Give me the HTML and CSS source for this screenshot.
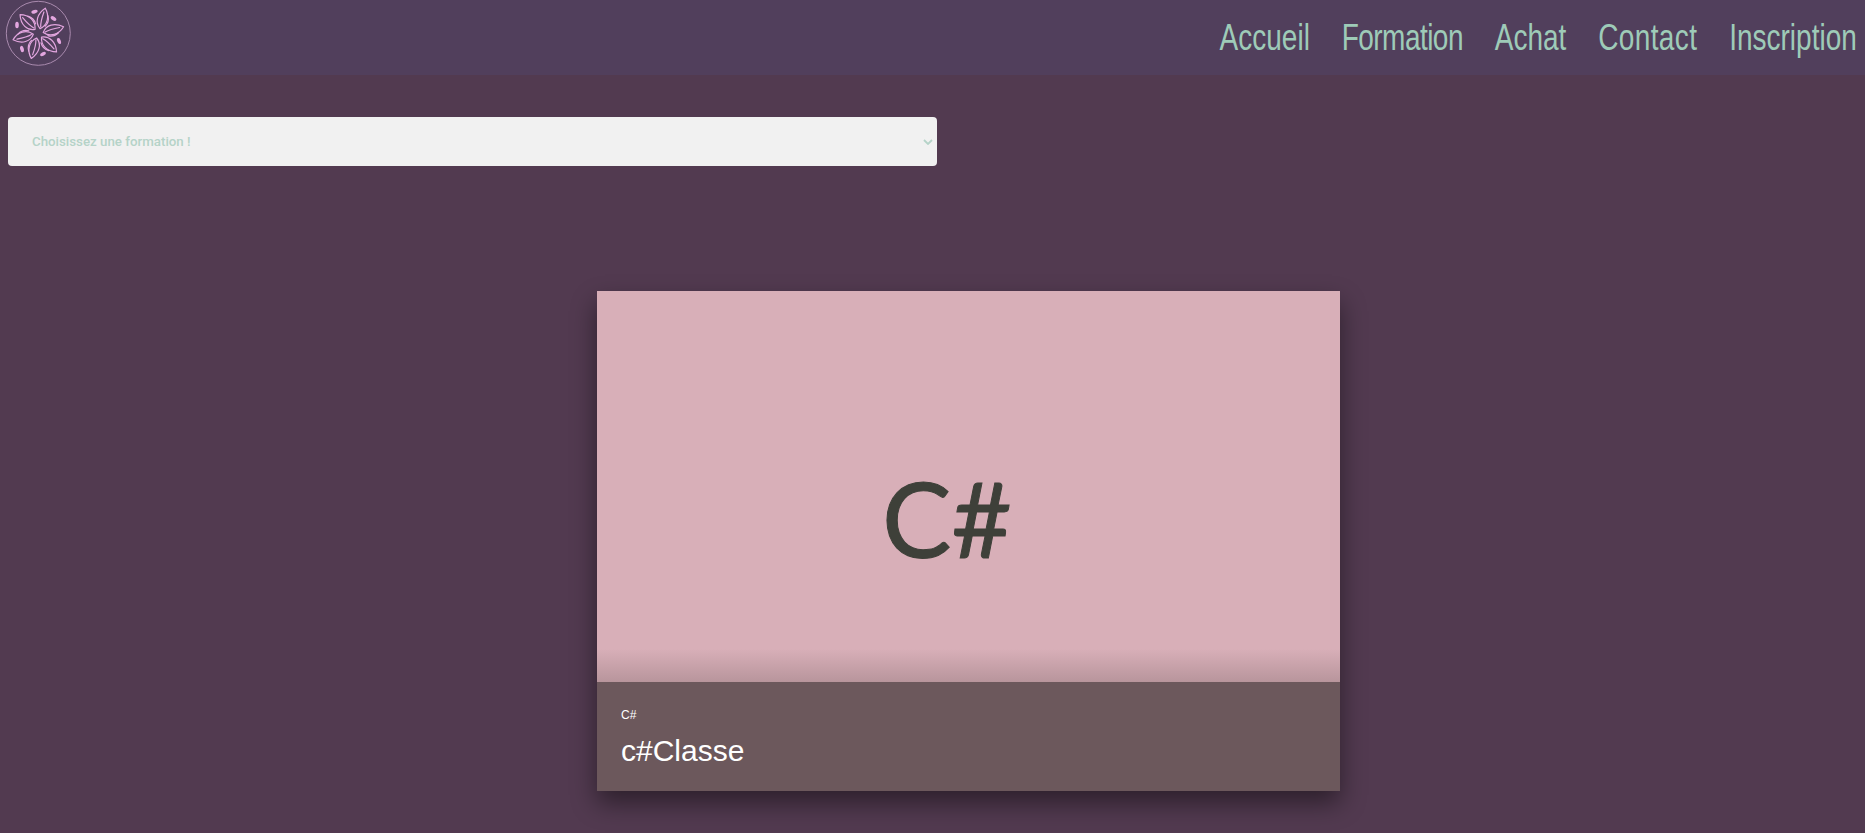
FILE: index.html
```html
<!DOCTYPE html>
<html lang="fr">
<head>
<meta charset="utf-8">
<title>Formations</title>
<link rel="stylesheet" href="styles.css">
</head>
<body>
<header class="topbar">
  <a class="logo" href="#" aria-label="Accueil">
    <svg viewBox="0 0 66 66" width="66" height="66" fill="none">
      <circle cx="33.300" cy="33.300" r="32" stroke="#a98aae" stroke-width="1"/>
      <g stroke="#e3a6df" stroke-width="1.200" stroke-linejoin="round" stroke-linecap="round">
        <g id="p" transform="translate(33.300 33.300) rotate(20)">
          <path d="M0-5C-7-9-8-18-2-26C5-20 6-11 0-5Z"/>
          <path d="M0-7C-2-12-2-17-2-22"/>
          <path d="M4-9C6-13 5-17 3-20"/>
        </g>
        <use href="#p" transform="rotate(60 33.300 33.300)"/>
        <use href="#p" transform="rotate(120 33.300 33.300)"/>
        <use href="#p" transform="rotate(180 33.300 33.300)"/>
        <use href="#p" transform="rotate(240 33.300 33.300)"/>
        <use href="#p" transform="rotate(300 33.300 33.300)"/>
      </g>
      <g fill="#e3a6df">
        <ellipse cx="29.500" cy="11.700" rx="3.200" ry="1.800" transform="rotate(-15 29.500 11.700)"/>
        <ellipse cx="48.500" cy="18.500" rx="3.200" ry="1.800" transform="rotate(35 48.500 18.500)"/>
        <ellipse cx="54" cy="41" rx="3.200" ry="1.800" transform="rotate(70 54 41)"/>
        <ellipse cx="38" cy="54" rx="3.200" ry="1.800" transform="rotate(-30 38 54)"/>
        <ellipse cx="17" cy="49" rx="3.200" ry="1.800" transform="rotate(75 17 49)"/>
        <ellipse cx="12" cy="25" rx="3.200" ry="1.800" transform="rotate(90 12 25)"/>
      </g>
    </svg>
  </a>
  <nav class="menu">
    <a class="menu-link" href="#">Accueil</a>
    <a class="menu-link menu-link-tight" href="#">Formation</a>
    <a class="menu-link" href="#">Achat</a>
    <a class="menu-link menu-link-wide" href="#">Contact</a>
    <a class="menu-link" href="#">Inscription</a>
  </nav>
</header>
<main class="content">
  <div class="picker">
    <span class="picker-label">Choisissez une formation !</span>
    <svg class="picker-arrow" viewBox="0 0 10 6" width="10" height="6" fill="none"><path d="M1 1l4 4 4-4" stroke="#b5d3c8" stroke-width="1.800"/></svg>
  </div>
  <article class="card">
    <div class="card-image"><span class="card-logo">C#</span></div>
    <div class="card-caption">
      <p class="card-tag">C#</p>
      <h2 class="card-title">c#Classe</h2>
    </div>
  </article>
</main>
</body>
</html>
```
FILE: styles.css
```css
* { box-sizing: border-box; }
html, body { height: 100%; }
body {
  margin: 0;
  height: 833px;
  overflow: hidden;
  background: #523a50;
  font-family: "Liberation Sans", Arial, sans-serif;
}
.topbar {
  height: 75px;
  background: #513f5c;
  display: flex;
  align-items: center;
  justify-content: space-between;
  padding: 0 8px 0 5px;
}
.logo { display: block; height: 66px; align-self: flex-start; }
.menu {
  display: flex;
  gap: 42px;
  transform: scaleX(.757);
  transform-origin: right center;
}
.menu-link {
  font-family: "Liberation Sans", sans-serif;
  font-size: 37px;
  color: #9ecbb8;
  text-decoration: none;
  line-height: 1;
}
.menu-link-tight { letter-spacing: -.7px; }
.menu-link-wide { letter-spacing: .5px; }
.content { padding: 42px 0 0 8px; }
.picker {
  width: 929px;
  height: 49px;
  background: #f1f1f1;
  border-radius: 4px;
  padding: 0 4px 0 24px;
  display: flex;
  align-items: center;
  justify-content: space-between;
}
.picker-label {
  font-family: Roboto, "Liberation Sans", sans-serif;
  font-size: 13.300px;
  font-weight: 500;
  color: #b5d3c8;
}
.card {
  width: 743px;
  height: 500px;
  margin: 125px 0 0 589px;
  box-shadow: 0 12px 24px rgba(0, 0, 0, .45);
  display: flex;
  flex-direction: column;
}
.card-image {
  height: 391px;
  background: linear-gradient(#d8afb8 0, #d8afb8 358px, #b8959c 391px);
  display: flex;
  justify-content: center;
  align-items: center;
  padding-right: 43px;
  padding-top: 62px;
}
.card-logo {
  font-family: Lato, sans-serif;
  font-size: 104px;
  line-height: 1;
  color: #3e4039;
  -webkit-text-stroke: 1px #3e4039;
}
.card-caption {
  flex: 1;
  background: #6c585c;
  padding: 26px 24px 0;
  color: #fff;
}
.card-tag { margin: 0; font-size: 12px; line-height: 14px; }
.card-title { margin: 11px 0 0; font-size: 30px; font-weight: 400; line-height: 36px; }
```
